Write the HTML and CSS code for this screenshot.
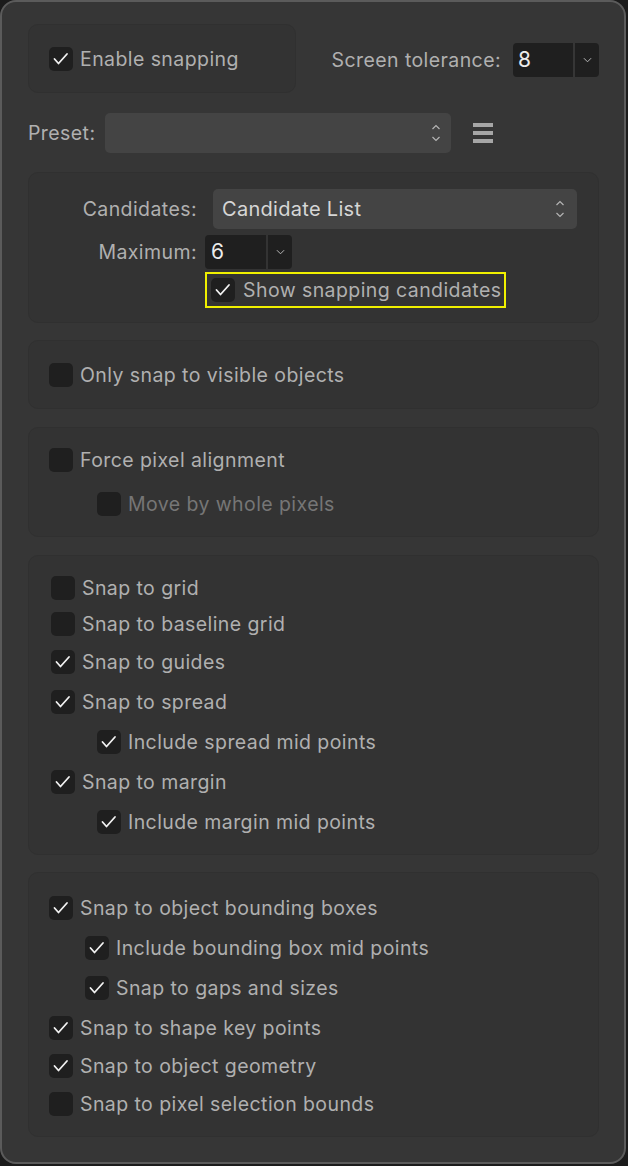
FILE: index.html
```html
<!DOCTYPE html>
<html>
<head>
<meta charset="utf-8">
<link rel="stylesheet" href="styles.css">
</head>
<body>
<div class="window">
  <div class="top-row">
    <div class="group group-enable">
      <div class="row">
        <span class="cb on"><svg viewBox="0 0 24 24"><polyline points="5.5,12 9.5,16.5 18,7"/></svg></span>
        <span class="lbl">Enable snapping</span>
      </div>
    </div>
    <div class="tolerance">
      <span class="lbl">Screen tolerance:</span>
      <div class="numfield nf-tol">
        <span class="num">8</span>
        <span class="drop"><svg viewBox="0 0 10 6"><polyline points="1,1 5,5 9,1"/></svg></span>
      </div>
    </div>
  </div>

  <div class="preset-row">
    <span class="lbl preset-lbl">Preset:</span>
    <div class="select select-preset">
      <span class="sel-text"></span>
      <span class="updown"><svg viewBox="0 0 10 20"><polyline points="1.5,6 5,2.5 8.5,6"/><polyline points="1.5,14 5,17.5 8.5,14"/></svg></span>
    </div>
    <span class="menu-icon"><i></i><i></i><i></i></span>
  </div>

  <div class="group group-cand">
    <div class="form-row fr-cand">
      <span class="lbl flabel">Candidates:</span>
      <div class="select select-cand">
        <span class="sel-text">Candidate List</span>
        <span class="updown"><svg viewBox="0 0 10 20"><polyline points="1.5,6 5,2.5 8.5,6"/><polyline points="1.5,14 5,17.5 8.5,14"/></svg></span>
      </div>
    </div>
    <div class="form-row fr-max">
      <span class="lbl flabel">Maximum:</span>
      <div class="numfield nf-max">
        <span class="num">6</span>
        <span class="drop"><svg viewBox="0 0 10 6"><polyline points="1,1 5,5 9,1"/></svg></span>
      </div>
    </div>
    <div class="form-row fr-show">
      <div class="highlight">
        <span class="cb on"><svg viewBox="0 0 24 24"><polyline points="5.5,12 9.5,16.5 18,7"/></svg></span>
        <span class="lbl">Show snapping candidates</span>
      </div>
    </div>
  </div>

  <div class="group group-visible">
    <div class="row">
      <span class="cb"></span>
      <span class="lbl">Only snap to visible objects</span>
    </div>
  </div>

  <div class="group group-pixel">
    <div class="row">
      <span class="cb"></span>
      <span class="lbl">Force pixel alignment</span>
    </div>
    <div class="row sub sub-48 gap20">
      <span class="cb"></span>
      <span class="lbl disabled">Move by whole pixels</span>
    </div>
  </div>

  <div class="group group-grid">
    <div class="row">
      <span class="cb"></span>
      <span class="lbl">Snap to grid</span>
    </div>
    <div class="row gap12">
      <span class="cb"></span>
      <span class="lbl">Snap to baseline grid</span>
    </div>
    <div class="row gap14">
      <span class="cb on"><svg viewBox="0 0 24 24"><polyline points="5.5,12 9.5,16.5 18,7"/></svg></span>
      <span class="lbl">Snap to guides</span>
    </div>
    <div class="row gap16">
      <span class="cb on"><svg viewBox="0 0 24 24"><polyline points="5.5,12 9.5,16.5 18,7"/></svg></span>
      <span class="lbl">Snap to spread</span>
    </div>
    <div class="row sub sub-46 gap16">
      <span class="cb on"><svg viewBox="0 0 24 24"><polyline points="5.5,12 9.5,16.5 18,7"/></svg></span>
      <span class="lbl">Include spread mid points</span>
    </div>
    <div class="row gap16">
      <span class="cb on"><svg viewBox="0 0 24 24"><polyline points="5.5,12 9.5,16.5 18,7"/></svg></span>
      <span class="lbl">Snap to margin</span>
    </div>
    <div class="row sub sub-46 gap16">
      <span class="cb on"><svg viewBox="0 0 24 24"><polyline points="5.5,12 9.5,16.5 18,7"/></svg></span>
      <span class="lbl">Include margin mid points</span>
    </div>
  </div>

  <div class="group group-objects">
    <div class="row">
      <span class="cb on"><svg viewBox="0 0 24 24"><polyline points="5.5,12 9.5,16.5 18,7"/></svg></span>
      <span class="lbl">Snap to object bounding boxes</span>
    </div>
    <div class="row sub sub-36 gap16">
      <span class="cb on"><svg viewBox="0 0 24 24"><polyline points="5.5,12 9.5,16.5 18,7"/></svg></span>
      <span class="lbl">Include bounding box mid points</span>
    </div>
    <div class="row sub sub-36 gap16">
      <span class="cb on"><svg viewBox="0 0 24 24"><polyline points="5.5,12 9.5,16.5 18,7"/></svg></span>
      <span class="lbl">Snap to gaps and sizes</span>
    </div>
    <div class="row gap16">
      <span class="cb on"><svg viewBox="0 0 24 24"><polyline points="5.5,12 9.5,16.5 18,7"/></svg></span>
      <span class="lbl">Snap to shape key points</span>
    </div>
    <div class="row gap14">
      <span class="cb on"><svg viewBox="0 0 24 24"><polyline points="5.5,12 9.5,16.5 18,7"/></svg></span>
      <span class="lbl">Snap to object geometry</span>
    </div>
    <div class="row gap14">
      <span class="cb"></span>
      <span class="lbl">Snap to pixel selection bounds</span>
    </div>
  </div>
</div>
</body>
</html>
```

FILE: styles.css
```css
html, body {
  margin: 0;
  padding: 0;
  background: #1b1b1b;
}

body {
  font-family: "Inter", "Noto Sans", sans-serif;
  font-size: 19.5px;
  letter-spacing: 0.42px;
  color: #b0b0b0;
}

.window {
  width: 626px;
  height: 1164px;
  box-sizing: border-box;
  border: 2px solid #5b5b5b;
  border-radius: 16px;
  background: #363636;
  padding: 22px 25px 0 26px;
  display: flex;
  flex-direction: column;
}

.lbl {
  white-space: nowrap;
  line-height: 24px;
}

.lbl.disabled {
  color: #767676;
}

/* groups */
.group {
  box-sizing: border-box;
  background: #333333;
  border: 1px solid #303030;
  border-radius: 10px;
  display: flex;
  flex-direction: column;
}

.top-row {
  display: flex;
  align-items: center;
  height: 69px;
}

.group-enable {
  width: 268px;
  height: 69px;
  justify-content: center;
  padding-left: 20px;
}

.tolerance {
  margin-left: auto;
  display: flex;
  align-items: center;
  gap: 12px;
  margin-top: 2px;
}

.row {
  display: flex;
  align-items: center;
  height: 24px;
  gap: 7px;
}

.sub-48 { padding-left: 48px; }
.sub-46 { padding-left: 46px; }
.sub-36 { padding-left: 36px; }

.gap12 { margin-top: 12px; }
.gap14 { margin-top: 14px; }
.gap16 { margin-top: 16px; }
.gap20 { margin-top: 20px; }

/* checkbox */
.cb {
  width: 24px;
  height: 24px;
  flex: none;
  border-radius: 5px;
  background: #1f1f1f;
  display: flex;
  align-items: center;
  justify-content: center;
}

.cb svg {
  width: 24px;
  height: 24px;
  fill: none;
  stroke: #f2f2f2;
  stroke-width: 1.8;
  stroke-linecap: round;
  stroke-linejoin: round;
}

/* number field */
.numfield {
  display: flex;
  height: 34px;
  gap: 2px;
}

.numfield .num {
  background: #1f1f1f;
  border-radius: 4px 0 0 4px;
  color: #ececec;
  font-size: 21px;
  letter-spacing: 0;
  line-height: 34px;
  padding-left: 5px;
  box-sizing: border-box;
}

.numfield .drop {
  background: #1f1f1f;
  border-radius: 0 4px 4px 0;
  display: flex;
  align-items: center;
  justify-content: center;
}

.numfield .drop svg {
  width: 9px;
  height: 6px;
  fill: none;
  stroke: #b8b8b8;
  stroke-width: 1.1;
}

.nf-tol .num { width: 60px; }
.nf-tol .drop { width: 24px; }
.nf-max .num { width: 61px; padding-left: 6px; }
.nf-max .drop { width: 24px; }

/* preset row */
.preset-row {
  display: flex;
  align-items: center;
  margin-top: 20px;
  height: 40px;
}

.preset-lbl {
  width: 77px;
  flex: none;
}

.select {
  box-sizing: border-box;
  height: 40px;
  background: #444444;
  border-radius: 5px;
  display: flex;
  align-items: center;
  justify-content: space-between;
  padding: 0 10px 0 9px;
}

.select-preset {
  width: 346px;
  padding-right: 10px;
}

.sel-text {
  color: #d6d6d6;
  font-size: 20px;
  letter-spacing: 0.3px;
  white-space: nowrap;
}

.updown svg {
  display: block;
  width: 10px;
  height: 20px;
  fill: none;
  stroke: #b4b4b4;
  stroke-width: 1.2;
}

.menu-icon {
  margin-left: 22px;
  width: 20px;
  display: flex;
  flex-direction: column;
  gap: 3.5px;
}

.menu-icon i {
  display: block;
  height: 4.5px;
  background: #a6a6a6;
}

/* candidates group */
.group-cand {
  margin-top: 19px;
  height: 151px;
  padding-top: 16px;
}

.form-row {
  display: flex;
  align-items: center;
}

.flabel {
  width: 168px;
  text-align: right;
  flex: none;
}

.fr-cand {
  height: 40px;
}

.select-cand {
  width: 364px;
  margin-left: 16px;
  padding-right: 12px;
}

.fr-max {
  margin-top: 6px;
  height: 34px;
}

.nf-max {
  margin-left: 8px;
}

.fr-show {
  margin-top: 3px;
  padding-left: 176px;
}

.highlight {
  box-sizing: border-box;
  height: 36px;
  width: 301px;
  border: 2px solid #f0f000;
  display: flex;
  align-items: center;
  gap: 8px;
  padding-left: 4px;
}

/* other groups */
.group-visible {
  margin-top: 17px;
  height: 69px;
  justify-content: center;
  padding-left: 20px;
}

.group-pixel {
  margin-top: 18px;
  height: 110px;
  padding: 20px 0 0 20px;
}

.group-grid {
  margin-top: 18px;
  height: 300px;
  padding: 20px 0 0 22px;
}

.group-objects {
  margin-top: 17px;
  height: 265px;
  padding: 23px 0 0 20px;
}
```
